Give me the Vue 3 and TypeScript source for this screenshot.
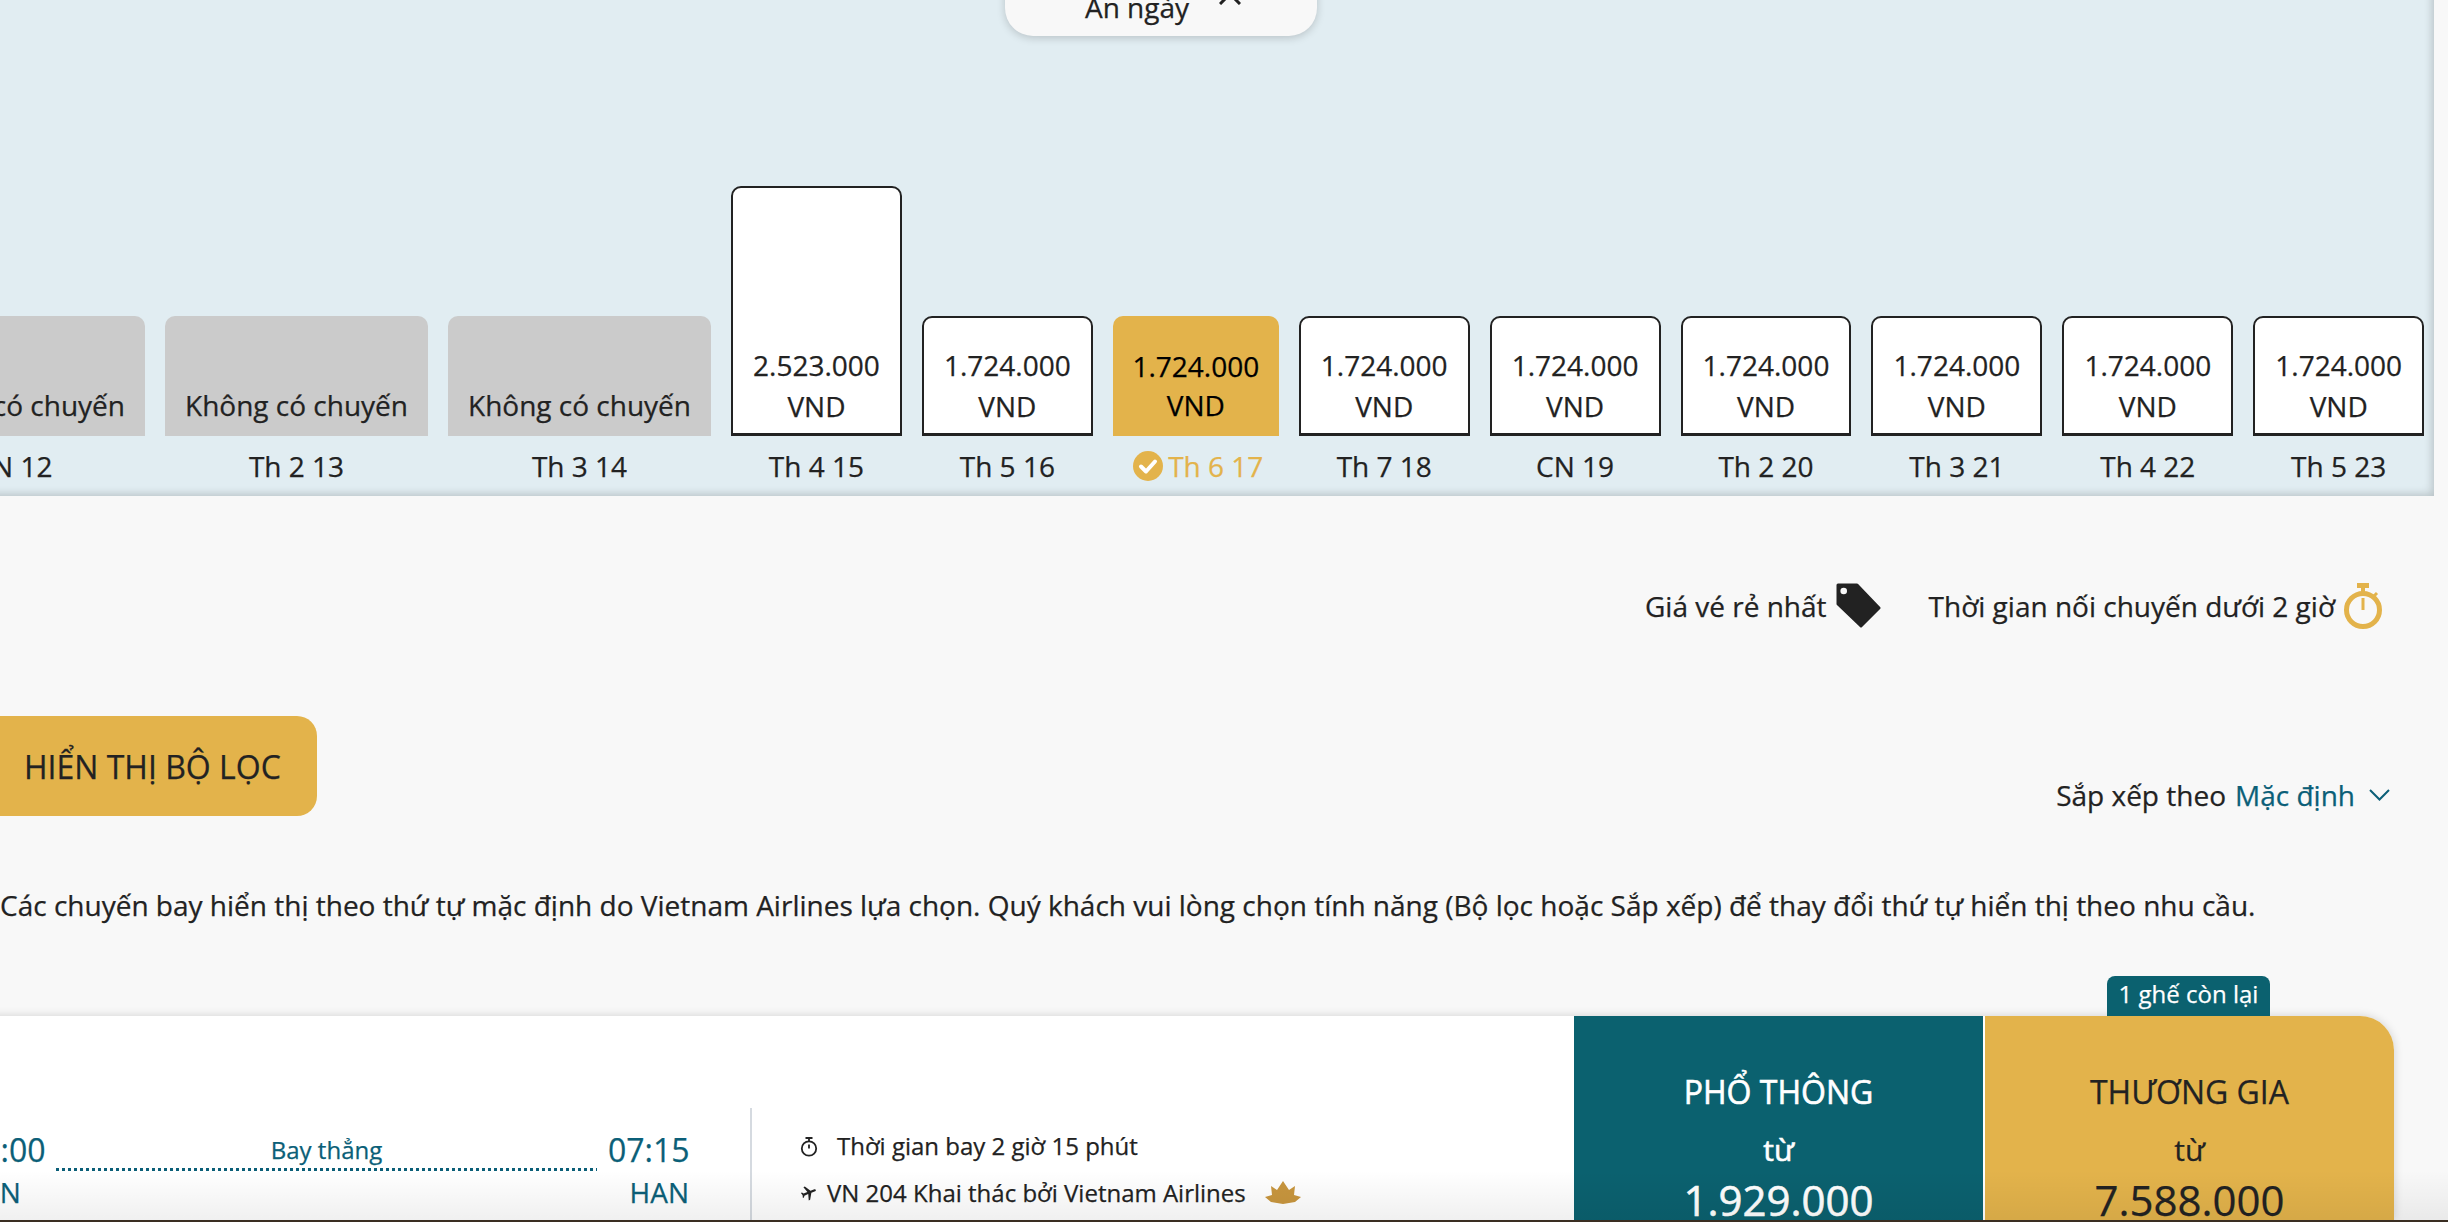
<script setup lang="ts">
interface Day {
  label: string
  kind: 'none' | 'fare' | 'selected'
  price?: string
  tall?: boolean
}

const days: Day[] = [
  { label: 'CN 12', kind: 'none' },
  { label: 'Th 2 13', kind: 'none' },
  { label: 'Th 3 14', kind: 'none' },
  { label: 'Th 4 15', kind: 'fare', price: '2.523.000', tall: true },
  { label: 'Th 5 16', kind: 'fare', price: '1.724.000' },
  { label: 'Th 6 17', kind: 'selected', price: '1.724.000' },
  { label: 'Th 7 18', kind: 'fare', price: '1.724.000' },
  { label: 'CN 19', kind: 'fare', price: '1.724.000' },
  { label: 'Th 2 20', kind: 'fare', price: '1.724.000' },
  { label: 'Th 3 21', kind: 'fare', price: '1.724.000' },
  { label: 'Th 4 22', kind: 'fare', price: '1.724.000' },
  { label: 'Th 5 23', kind: 'fare', price: '1.724.000' },
]
</script>

<template>
  <div class="page">
    <section class="calendar">
      <button class="hide-days">
        <span>Ẩn ngày</span>
        <svg class="hide-x" width="22" height="22" viewBox="0 0 22 22">
          <path d="M1 1l20 20M21 1L1 21" stroke="#222" stroke-width="3" fill="none" />
        </svg>
      </button>
      <div class="days">
        <div v-for="d in days" :key="d.label" class="day" :class="`day-${d.kind}`">
          <div class="bar" :class="{ tall: d.tall }">
            <template v-if="d.price">
              <span>{{ d.price }}</span>
              <span>VND</span>
            </template>
            <span v-else>Không có chuyến</span>
          </div>
          <div class="day-label">
            <svg v-if="d.kind === 'selected'" width="30" height="30" viewBox="0 0 30 30">
              <circle cx="15" cy="15" r="15" fill="#e3b34b" />
              <path d="M8 15.5l5 5 9-10" stroke="#fff" stroke-width="4" stroke-linecap="round" stroke-linejoin="round" fill="none" />
            </svg>
            <span>{{ d.label }}</span>
          </div>
        </div>
      </div>
    </section>

    <div class="legend">
      <div class="legend-item">
        <span>Giá vé rẻ nhất</span>
        <svg width="46" height="46" viewBox="0 0 46 46">
          <path
            d="M3 2h19l22 23-18 18L3 21z"
            fill="#222"
            stroke="#222"
            stroke-width="3"
            stroke-linejoin="round"
          />
          <circle cx="8.700" cy="8" r="3.300" fill="#f8f8f8" />
        </svg>
      </div>
      <div class="legend-item">
        <span>Thời gian nối chuyến dưới 2 giờ</span>
        <svg width="40" height="46" viewBox="0 0 40 46" fill="none" stroke="#e3b34b">
          <circle cx="20" cy="27" r="16.500" stroke-width="5" />
          <path d="M14 2.500h12" stroke-width="5" />
          <path d="M20 4v6" stroke-width="4" />
          <path d="M31 13l3-3" stroke-width="3" />
          <path d="M20 15v12" stroke-width="3" />
        </svg>
      </div>
    </div>

    <div class="toolbar">
      <button class="filter-btn">HIỂN THỊ BỘ LỌC</button>
      <div class="sort">
        <span>Sắp xếp theo</span>
        <span class="sort-value">Mặc định</span>
        <svg width="21" height="12" viewBox="0 0 21 12">
          <path d="M1 1l9.500 9.500L20 1" stroke="#0b5f78" stroke-width="2" fill="none" />
        </svg>
      </div>
    </div>

    <p class="notice">
      Các chuyến bay hiển thị theo thứ tự mặc định do Vietnam Airlines lựa chọn. Quý khách vui lòng chọn tính năng (Bộ lọc hoặc Sắp xếp) để thay đổi thứ tự hiển thị theo nhu cầu.
    </p>

    <article class="flight">
      <div class="seats-left">1 ghế còn lại</div>
      <div class="route">
        <div class="stop">
          <div class="time">05:00</div>
          <div class="code">SGN</div>
        </div>
        <div class="leg">
          <div class="leg-label">Bay thẳng</div>
          <div class="leg-line"></div>
        </div>
        <div class="stop stop-end">
          <div class="time">07:15</div>
          <div class="code">HAN</div>
        </div>
      </div>
      <div class="details">
        <div class="detail-row">
          <svg class="detail-icon" width="18" height="22" viewBox="0 0 18 22" fill="none" stroke="#222">
            <circle cx="9" cy="13.500" r="7.200" stroke-width="1.800" />
            <path d="M5.500 3h7M9 3.500v3M9 9.500v4" stroke-width="1.800" />
          </svg>
          <span class="gap-wide">Thời gian bay 2 giờ 15 phút</span>
        </div>
        <div class="detail-row">
          <svg class="detail-icon" width="18" height="18" viewBox="0 0 24 24">
            <path
              transform="rotate(68 12 12)"
              d="M21 16v-2l-8-5V3.500c0-.83-.67-1.500-1.500-1.500S10 2.670 10 3.500V9l-8 5v2l8-2.500V19l-2 1.500V22l3.500-1 3.500 1v-1.500L13 19v-5.500l8 2.500z"
              fill="#222"
            />
          </svg>
          <span class="gap-narrow">VN 204 Khai thác bởi Vietnam Airlines</span>
          <svg class="lotus" width="36" height="23" viewBox="0 0 36 23">
            <path d="M0 16l7-2-1-9 6 4 6-9 6 9 6-4-1 9 7 2-6 5-12 2-12-2z" fill="#c8963e" />
          </svg>
        </div>
      </div>
      <div class="fare fare-eco">
        <div class="fare-name">PHỔ THÔNG</div>
        <div class="fare-from">từ</div>
        <div class="fare-price">1.929.000</div>
      </div>
      <div class="fare fare-biz">
        <div class="fare-name">THƯƠNG GIA</div>
        <div class="fare-from">từ</div>
        <div class="fare-price">7.588.000</div>
      </div>
    </article>

    <div class="fade"></div>
    <div class="edge"></div>
  </div>
</template>

<style scoped>
.page {
  position: relative;
  display: flex;
  flex-direction: column;
  width: 2448px;
  height: 1222px;
  overflow: hidden;
  background: #f8f8f8;
  color: #222;
  font-family: "Open Sans", "Noto Sans", sans-serif;
  font-size: 28px;
  -webkit-text-stroke: 0.25px currentColor;
}

.calendar {
  position: relative;
  flex: none;
  width: 2434px;
  height: 496px;
  background: #e1edf2;
  box-shadow: inset -6px -6px 8px -4px rgba(0, 0, 0, 0.18);
  overflow: hidden;
}

.hide-days {
  position: absolute;
  top: -40px;
  left: 1005px;
  display: flex;
  align-items: flex-end;
  justify-content: center;
  gap: 30px;
  width: 312px;
  height: 76px;
  padding: 0 0 9px 4px;
  border: 0;
  border-radius: 28px;
  background: #f8f8f8;
  box-shadow: 0 2px 8px rgba(0, 0, 0, 0.18);
  color: #222;
  font: inherit;
  line-height: 40px;
}

.hide-x {
  margin-bottom: 22px;
}

.days {
  display: flex;
  align-items: flex-end;
  gap: 20px;
  height: 100%;
  margin-left: -118px;
}

.day {
  flex: none;
  width: 170.9px;
}

.day-none {
  width: 263px;
}

.day-selected {
  width: 166px;
}

.bar {
  display: flex;
  flex-direction: column;
  justify-content: flex-end;
  align-items: center;
  box-sizing: border-box;
  height: 120px;
  padding-bottom: 6px;
  border-radius: 10px 10px 0 0;
  line-height: 41px;
}

.bar.tall {
  height: 250px;
}

.day-none .bar {
  padding-bottom: 11px;
  background: #cbcbcb;
  line-height: 40px;
}

.day-fare .bar {
  border: 2px solid #222;
  border-bottom-width: 3px;
  background: #fff;
}

.day-selected .bar {
  padding-bottom: 11px;
  background: #e3b34b;
  color: #000;
  line-height: 39px;
}

.day-label {
  display: flex;
  align-items: center;
  justify-content: center;
  gap: 5px;
  height: 60px;
}

.day-selected .day-label {
  padding-left: 5px;
  color: #e3b34b;
}

.legend {
  display: flex;
  justify-content: flex-end;
  gap: 48px;
  margin-top: 87px;
  padding-right: 65px;
}

.legend-item {
  display: flex;
  align-items: center;
  gap: 8px;
  height: 46px;
}

.toolbar {
  display: flex;
  align-items: flex-end;
  justify-content: space-between;
  margin-top: 87px;
  padding-right: 58px;
}

.filter-btn {
  width: 347px;
  height: 100px;
  margin-left: -30px;
  padding: 0 0 0 54px;
  border: 0;
  border-radius: 20px;
  background: #e3b34b;
  color: #222;
  font: inherit;
  font-size: 32px;
  text-align: left;
}

.sort {
  display: flex;
  align-items: center;
  height: 40px;
  margin-bottom: 1px;
}

.sort-value {
  margin: 0 14px 0 9px;
  color: #0b5f78;
}

.notice {
  margin: 69px 0 0;
  padding-left: 0;
  line-height: 40px;
  white-space: nowrap;
}

.flight {
  position: relative;
  flex: 1;
  display: flex;
  min-height: 0;
  margin: 91px 54px 0 -40px;
  border-radius: 0 34px 0 0;
  background: #fff;
  box-shadow: 0 0 10px rgba(0, 0, 0, 0.16);
}

.seats-left {
  position: absolute;
  top: -40px;
  left: 2147px;
  width: 163px;
  height: 40px;
  border-radius: 8px 8px 0 0;
  background: #0b616f;
  color: #fff;
  font-size: 24px;
  line-height: 36px;
  text-align: center;
}

.route {
  flex: none;
  display: flex;
  box-sizing: border-box;
  width: 792px;
  margin-top: 92px;
  padding: 20px 61px 0 4px;
  border-right: 2px solid #d5dae0;
  color: #0b5f78;
}

.stop {
  flex: none;
  width: 81px;
}

.stop-end {
  text-align: right;
}

.time {
  font-size: 32px;
  line-height: 44px;
}

.code {
  line-height: 40px;
}

.leg {
  flex: 1;
  margin: 4px 11px 0;
  font-size: 24px;
  line-height: 36px;
  text-align: center;
}

.leg-line {
  height: 3px;
  background: repeating-linear-gradient(90deg, #0b5f78 0 3px, transparent 3px 6px);
}

.details {
  flex: 1;
  margin-top: 106px;
  padding-left: 48px;
  font-size: 24px;
}

.detail-row {
  display: flex;
  align-items: center;
  height: 47px;
}

.detail-icon {
  flex: none;
}

.gap-wide {
  margin-left: 19px;
}

.gap-narrow {
  margin-left: 9px;
}

.lotus {
  margin-left: 19px;
}

.fare {
  flex: none;
  display: flex;
  flex-direction: column;
  align-items: center;
  width: 409px;
  padding-top: 54px;
  overflow: hidden;
  text-align: center;
}

.fare-eco {
  margin-right: 2px;
  background: #0b616f;
  color: #fff;
  -webkit-text-stroke: 0.6px currentColor;
}

.fare-biz {
  border-radius: 0 34px 0 0;
  background: #e3b34b;
}

.fare-name {
  font-size: 32px;
  line-height: 44px;
}

.fare-from {
  margin-top: 14px;
  font-size: 30px;
  line-height: 44px;
}

.fare-price {
  margin-top: 3px;
  font-size: 42px;
  line-height: 50px;
}

.fade {
  position: absolute;
  left: 0;
  right: 0;
  bottom: 2px;
  height: 50px;
  background: linear-gradient(rgba(0, 0, 0, 0), rgba(0, 0, 0, 0.06));
  pointer-events: none;
}

.edge {
  position: relative;
  flex: none;
  height: 2px;
  background: #3a2e22;
}
</style>
